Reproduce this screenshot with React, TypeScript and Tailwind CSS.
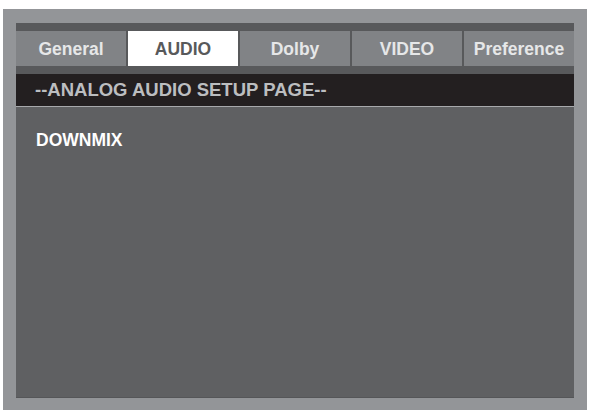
import React from "react";

const tabs = ["General", "AUDIO", "Dolby", "VIDEO", "Preference"];
const active = "AUDIO";

export default function App() {
  return (
    <div
      className="w-[590px] h-[410px] bg-white pl-[3px] pr-[3px] pt-[9px] overflow-hidden"
      style={{ fontFamily: '"Liberation Sans", Arial, sans-serif' }}
    >
      <div className="h-[401px] bg-[#939598] pl-[13px] pr-[13px] pt-[14px] pb-[12px]">
        <div className="flex flex-col h-full bg-[#58595b]">
          {/* Tab bar */}
          <div className="flex gap-[2px] mt-[8px] h-[35px]">
            {tabs.map((t) => (
              <div
                key={t}
                className={
                  t === active
                    ? "w-[110px] flex items-center justify-center pt-[1px] bg-white text-[#58595b] font-bold text-[17.5px]"
                    : "w-[110px] flex items-center justify-center pt-[1px] bg-[#818386] text-[#e6e7e8] font-bold text-[17.5px]"
                }
              >
                {t}
              </div>
            ))}
          </div>

          {/* Page header */}
          <div className="mt-[8px] h-[32px] bg-[#231f20] flex items-center pl-[19px] text-[#bcbec0] font-bold text-[18.5px] border-b border-[#a7a9ac] box-content">
            --ANALOG AUDIO SETUP PAGE--
          </div>

          {/* Content */}
          <div className="flex-1 bg-[#5f6062] pl-[20px] pt-[23px] border-b border-[#555658]">
            <div className="text-white font-bold text-[17.5px] leading-[20px]">DOWNMIX</div>
          </div>
        </div>
      </div>
    </div>
  );
}
